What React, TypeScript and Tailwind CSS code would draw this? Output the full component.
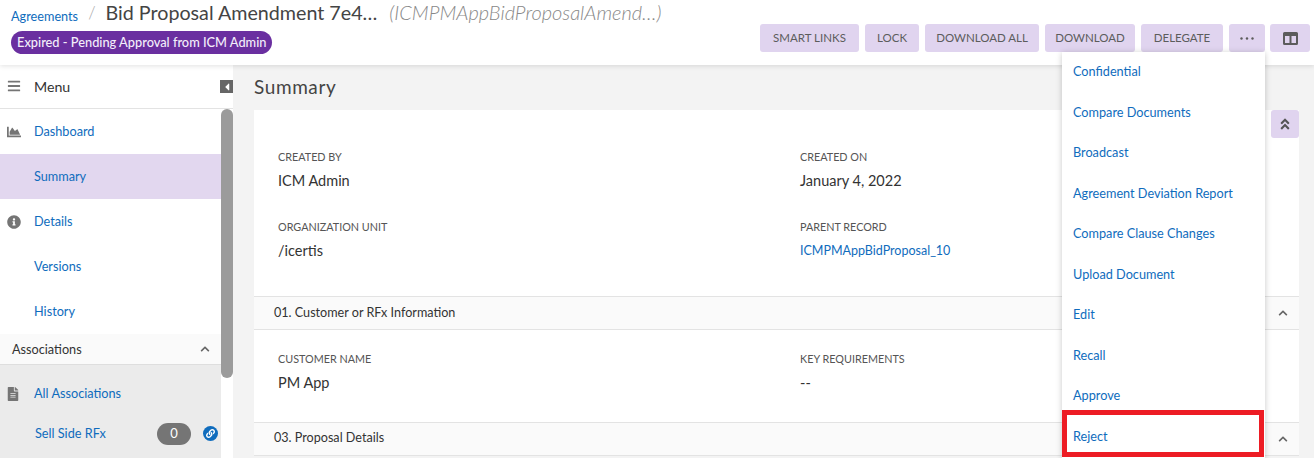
import React from "react";
import { FaBars, FaChartArea, FaInfoCircle, FaFileAlt, FaLink, FaAngleDoubleUp, FaCaretLeft, FaChevronUp } from "react-icons/fa";

const Field = ({ label, value, link }: { label: string; value: string; link?: boolean }) => (
  <div className="flex flex-col">
    <div className="text-[10.8px] leading-[14px] text-[#555]">{label}</div>
    <div className={link ? "mt-[7px] text-[12.5px] leading-[20px] text-[#0f6cbd]" : "mt-[6px] text-[14.5px] leading-[22px] text-[#333]"}>{value}</div>
  </div>
);

const SectionHead = ({ title, lift }: { title: string; lift?: boolean }) => (
  <div className={"flex h-[34px] items-center justify-between border-y border-[#e3e3e3] bg-[#fafafa] pl-[20px] pr-[11px] text-[12.6px] text-[#333] " + (lift ? "pb-[1px]" : "")}>
    <span>{title}</span>
    <FaChevronUp className="text-[10px] text-[#666]" />
  </div>
);

const NavItem = ({ label, icon, active }: { label: string; icon?: React.ReactNode; active?: boolean }) => (
  <div className={"flex h-[45px] items-center text-[12.7px] text-[#0f6cbd] " + (active ? "bg-[#e2d7ef]" : "")}>
    <span className="flex w-[34px] justify-center pr-[7px] text-[#757575]">{icon}</span>
    <span>{label}</span>
  </div>
);

const TopButton = ({ children, w }: { children: React.ReactNode; w: string }) => (
  <div className={"flex h-[28px] items-center justify-center rounded-[3px] bg-[#e0d4ef] text-[11.5px] text-[#5c5c5c] " + w}>{children}</div>
);

const menuItems = ["Confidential", "Compare Documents", "Broadcast", "Agreement Deviation Report", "Compare Clause Changes", "Upload Document", "Edit", "Recall", "Approve", "Reject"];

export default function App() {
  return (
    <div className="relative flex h-[458px] w-[1314px] flex-col overflow-hidden bg-[#f3f3f3] font-['Lato','Noto_Sans',sans-serif]">
      <header className="relative z-10 flex h-[65px] shrink-0 justify-between bg-white pl-[11px] pr-[4px] shadow-[0_1px_5px_rgba(0,0,0,0.12)]">
        <div className="flex flex-col items-start">
          <div className="flex h-[31px] items-start">
            <span className="mt-[7px] text-[12.7px] leading-[18px] text-[#0f6cbd]">Agreements</span>
            <span className="ml-[10px] mr-[10px] mt-[1px] text-[17px] font-light leading-[24px] text-[#aaa]">/</span>
            <span className="text-[19.7px] leading-[25px] text-[#444]">Bid Proposal Amendment 7e4…</span>
            <span className="ml-[12px] text-[20px] font-light italic leading-[25px] text-[#888]">(ICMPMAppBidProposalAmend…)</span>
          </div>
          <div className="flex h-[23px] items-center rounded-full bg-[#6a2fa0] px-[6px] text-[12.8px] font-medium text-[#f3eefa]">Expired - Pending Approval from ICM Admin</div>
        </div>
        <div className="mt-[24px] flex h-[28px] gap-[6px]">
          <TopButton w="w-[99px]">SMART LINKS</TopButton>
          <TopButton w="w-[54px]">LOCK</TopButton>
          <TopButton w="w-[114px]">DOWNLOAD ALL</TopButton>
          <TopButton w="w-[90px]">DOWNLOAD</TopButton>
          <TopButton w="w-[82px]">DELEGATE</TopButton>
          <TopButton w="w-[36px]">
            <svg width="14" height="3" viewBox="0 0 14 3"><circle cx="1.500" cy="1.500" r="1.200" fill="#5c5c5c" /><circle cx="7" cy="1.500" r="1.200" fill="#5c5c5c" /><circle cx="12.500" cy="1.500" r="1.200" fill="#5c5c5c" /></svg>
          </TopButton>
          <TopButton w="-ml-[1px] w-[40px]">
            <svg width="15" height="13" viewBox="0 0 15 13"><path fill="#5c5c5c" fillRule="evenodd" d="M1.500 0h12A1.500 1.500 0 0 1 15 1.500v10a1.500 1.500 0 0 1-1.500 1.500h-12A1.500 1.500 0 0 1 0 11.500v-10A1.500 1.500 0 0 1 1.500 0ZM2 4v7h4.500V4H2Zm6.500 0v7H13V4H8.500Z" /></svg>
          </TopButton>
        </div>
      </header>

      <div className="flex min-h-0 flex-1">
        <aside className="flex w-[233px] shrink-0 flex-col bg-white">
          <div className="flex h-[44px] shrink-0 items-center justify-between border-b border-[#e3e3e3]">
            <div className="flex items-center">
              <span className="flex w-[34px] justify-center pr-[7px] text-[14px] text-[#757575]"><FaBars /></span>
              <span className="text-[14.200px] text-[#333]">Menu</span>
            </div>
            <span className="flex h-[13px] w-[13px] items-center justify-center bg-[#666] text-[12px] text-white"><FaCaretLeft /></span>
          </div>
          <div className="flex min-h-0 flex-1">
            <div className="min-w-0 flex-1">
              <NavItem label="Dashboard" icon={<FaChartArea className="text-[14px]" />} />
              <NavItem label="Summary" active />
              <NavItem label="Details" icon={<FaInfoCircle className="text-[14px]" />} />
              <NavItem label="Versions" />
              <NavItem label="History" />
              <div className="flex h-[31px] items-center justify-between border-b border-[#dedede] bg-[#fafafa] pl-[12px] pr-[11px] text-[12.7px] text-[#333]">
                <span className="pt-[1px]">Associations</span>
                <FaChevronUp className="text-[10px] text-[#666]" />
              </div>
              <div className="h-[100px] bg-[#ebebeb]">
                <div className="flex h-[56px] items-center pt-[2px] text-[12.7px] text-[#0f6cbd]">
                  <span className="flex w-[34px] justify-center pr-[9px] text-[#757575]"><FaFileAlt className="text-[14px]" /></span>
                  All Associations
                </div>
                <div className="flex h-[24px] items-center pl-[35px] pr-[3px] pt-[1px] text-[12.7px] text-[#0f6cbd]">
                  <span className="flex-1">Sell Side RFx</span>
                  <span className="flex h-[22px] w-[34px] items-center justify-center rounded-full bg-[#757575] text-[13px] text-white">0</span>
                  <span className="ml-[12px] flex h-[15px] w-[15px] items-center justify-center rounded-full bg-[#0f6cbd] text-[9px] text-white"><FaLink /></span>
                </div>
              </div>
            </div>
            <div className="w-[12px] shrink-0 bg-white">
              <div className="h-[269px] rounded-[6px] bg-[#9b9b9b]" />
            </div>
          </div>
        </aside>

        <main className="min-w-0 flex-1 pl-[21px] pr-[15px]">
          <div className="flex h-[45px] items-center text-[19px] tracking-[0.6px] text-[#444]">Summary</div>
          <div className="relative bg-white">
            <div className="absolute right-0 top-0 flex h-[28px] w-[28px] items-center justify-center rounded-[3px] bg-[#e0d4ef] text-[14px] text-[#555]"><FaAngleDoubleUp /></div>
            <div className="grid h-[186px] grid-cols-[522px_1fr] content-start gap-y-[28px] pl-[24px] pt-[40px]">
              <Field label="CREATED BY" value="ICM Admin" />
              <Field label="CREATED ON" value="January 4, 2022" />
              <Field label="ORGANIZATION UNIT" value="/icertis" />
              <Field label="PARENT RECORD" value="ICMPMAppBidProposal_10" link />
            </div>
            <SectionHead title="01. Customer or RFx Information" />
            <div className="grid h-[92px] grid-cols-[522px_1fr] content-start pl-[24px] pt-[22px]">
              <Field label="CUSTOMER NAME" value="PM App" />
              <Field label="KEY REQUIREMENTS" value="--" />
            </div>
            <SectionHead title="03. Proposal Details" lift />
          </div>
        </main>
      </div>

      <div className="absolute left-[1062px] top-[52px] z-20 h-[406px] w-[203px] bg-white shadow-[0_1px_6px_rgba(0,0,0,0.22)]">
        {menuItems.map((item) => (
          <div key={item} className="relative flex h-[40.500px] items-center pb-[1px] pl-[11px] text-[12.7px] text-[#0f6cbd]">
            {item}
            {item === "Reject" && <div className="absolute left-0 top-[-6.500px] h-[47px] w-[202px] border-[5px] border-[#ed1c24]" />}
          </div>
        ))}
      </div>
    </div>
  );
}
